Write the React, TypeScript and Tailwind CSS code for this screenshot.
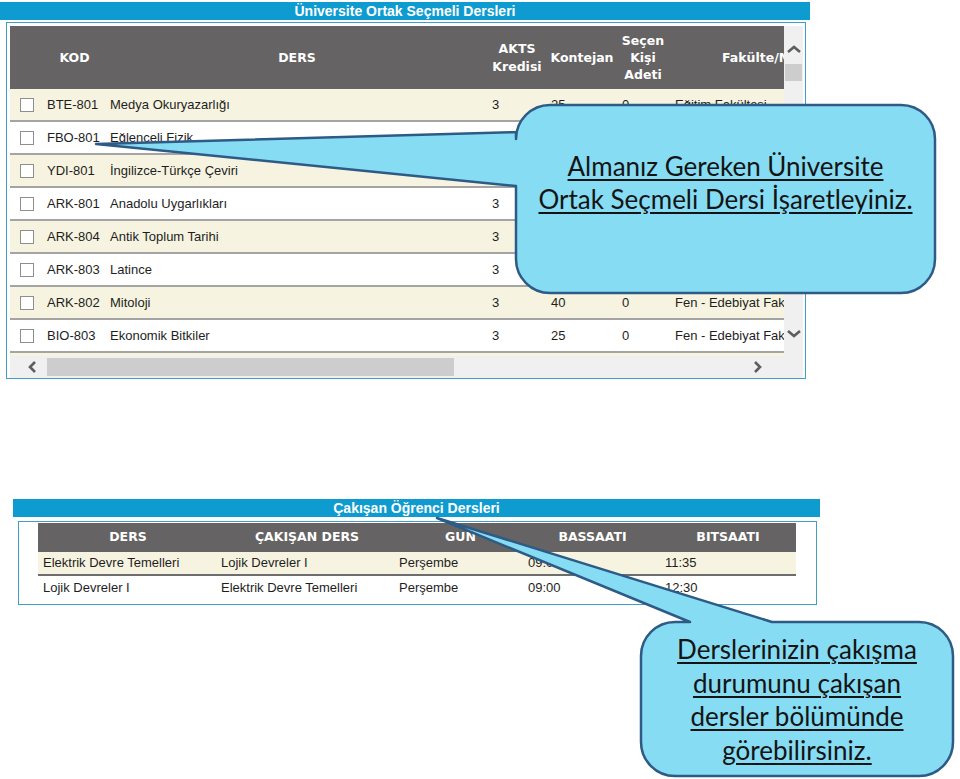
import { FC } from 'react';

type Course = {
  kod: string;
  ders: string;
  akts: string;
  kontejan: string;
  secen: string;
  fakulte: string;
};

const courses: Course[] = [
  { kod: 'BTE-801', ders: 'Medya Okuryazarlığı', akts: '3', kontejan: '25', secen: '0', fakulte: 'Eğitim Fakültesi' },
  { kod: 'FBO-801', ders: 'Eğlenceli Fizik', akts: '3', kontejan: '25', secen: '0', fakulte: 'Eğitim Fakültesi' },
  { kod: 'YDI-801', ders: 'İngilizce-Türkçe Çeviri', akts: '3', kontejan: '30', secen: '0', fakulte: 'Eğitim Fakültesi' },
  { kod: 'ARK-801', ders: 'Anadolu Uygarlıkları', akts: '3', kontejan: '40', secen: '0', fakulte: 'Fen - Edebiyat Fakültesi' },
  { kod: 'ARK-804', ders: 'Antik Toplum Tarihi', akts: '3', kontejan: '40', secen: '0', fakulte: 'Fen - Edebiyat Fakültesi' },
  { kod: 'ARK-803', ders: 'Latince', akts: '3', kontejan: '40', secen: '0', fakulte: 'Fen - Edebiyat Fakültesi' },
  { kod: 'ARK-802', ders: 'Mitoloji', akts: '3', kontejan: '40', secen: '0', fakulte: 'Fen - Edebiyat Fakültesi' },
  { kod: 'BIO-803', ders: 'Ekonomik Bitkiler', akts: '3', kontejan: '25', secen: '0', fakulte: 'Fen - Edebiyat Fakültesi' },
  { kod: 'BIO-804', ders: 'Tıbbi Bitkiler', akts: '3', kontejan: '25', secen: '0', fakulte: 'Fen - Edebiyat Fakültesi' },
];

const clashes = [
  ['Elektrik Devre Temelleri', 'Lojik Devreler I', 'Perşembe', '09:00', '11:35'],
  ['Lojik Devreler I', 'Elektrik Devre Temelleri', 'Perşembe', '09:00', '12:30'],
];

const headFont = "font-['DejaVu_Sans',sans-serif] font-bold text-[12.5px] text-white";

const Chevron: FC<{ dir: 'up' | 'down' | 'left' | 'right' }> = ({ dir }) => {
  const vertical = dir === 'up' || dir === 'down';
  const points = {
    up: '2,7 8,2 14,7',
    down: '2,1 8,6 14,1',
    left: '7,2 2,7 7,12',
    right: '1,2 6,7 1,12',
  }[dir];
  return (
    <svg width={vertical ? 16 : 8} height={vertical ? 8 : 14} viewBox={vertical ? '0 0 16 8' : '0 0 8 14'}>
      <polyline points={points} fill="none" stroke="#5e5e5e" strokeWidth="2.6" />
    </svg>
  );
};

const Callouts: FC = () => (
  <>
    <svg className="absolute left-0 top-0 pointer-events-none" width="960" height="779">
      <path
        d="M 550 105 H 901 A 34 34 0 0 1 935 139 V 259 A 34 34 0 0 1 901 293 H 550 A 34 34 0 0 1 516 259 V 186 L 96 144 L 516 132 V 139 A 34 34 0 0 1 550 105 Z"
        fill="#86dcf3"
        stroke="#2e5a86"
        strokeWidth="2.5"
        strokeLinejoin="round"
      />
      <path
        d="M 675 622 H 690 L 437 518 L 772 622 H 919 A 34 34 0 0 1 953 656 V 742 A 34 34 0 0 1 919 776 H 675 A 34 34 0 0 1 641 742 V 656 A 34 34 0 0 1 675 622 Z"
        fill="#86dcf3"
        stroke="#2e5a86"
        strokeWidth="2.5"
        strokeLinejoin="round"
      />
    </svg>
    <div className="absolute left-[516px] top-[150px] w-[419px] text-center font-['Lato',sans-serif] text-[26px] leading-[33px] text-[#141414] underline decoration-[1.5px] underline-offset-[3px]">
      <div>Almanız Gereken Üniversite</div>
      <div>Ortak Seçmeli Dersi İşaretleyiniz.</div>
    </div>
    <div className="absolute left-[641px] top-[633px] w-[312px] text-center font-['Lato',sans-serif] text-[26px] leading-[33.5px] text-[#141414] underline decoration-[1.5px] underline-offset-[3px]">
      <div>Derslerinizin çakışma</div>
      <div>durumunu çakışan</div>
      <div>dersler bölümünde</div>
      <div>görebilirsiniz.</div>
    </div>
  </>
);

const App: FC = () => {
  return (
    <div className="relative w-[960px] h-[779px] bg-white overflow-hidden font-['Liberation_Sans',Arial,sans-serif] text-[13px] text-[#1e1e1e]">
      {/* Üniversite Ortak Seçmeli Dersleri */}
      <div className="mt-[2px] w-[810px] h-[18px] bg-[#0e9bd0] flex items-center justify-center text-white font-bold text-[14px]">
        Üniversite Ortak Seçmeli Dersleri
      </div>
      <div className="mt-[2px] ml-[6px] w-[800px] border border-[#3f9fc4] pt-[3px] pl-[3px]">
        <div className="flex">
          <div className="w-[774px] h-[330px] overflow-hidden">
            <div className="w-[1000px]">
              <div className={`flex h-[63px] bg-[#656363] ${headFont} leading-[17px]`}>
                <div className="w-[32px]" />
                <div className="w-[65px] flex items-center justify-center">KOD</div>
                <div className="w-[380px] flex items-center justify-center">DERS</div>
                <div className="w-[60px] flex items-center justify-center text-center leading-[18px]">
                  AKTS
                  <br />
                  Kredisi
                </div>
                <div className="w-[70px] flex items-center justify-center">Kontejan</div>
                <div className="w-[52px] flex items-center justify-center text-center">
                  Seçen
                  <br />
                  Kişi
                  <br />
                  Adeti
                </div>
                <div className="w-[300px] flex items-center pl-[53px]">Fakülte/Meslek Yüksekokulu</div>
              </div>
              {courses.map((c, i) => (
                <div
                  key={c.kod}
                  className={`flex items-center h-[33px] border-b-2 border-[#a4a4a4] ${i % 2 === 0 ? 'bg-[#f6f4e0]' : 'bg-white'}`}
                >
                  <div className="w-[32px] pl-[10px]">
                    <div className="w-[14px] h-[14px] border border-[#8f8f8f] bg-white" />
                  </div>
                  <div className="w-[65px] pl-[5px]">{c.kod}</div>
                  <div className="w-[380px] pl-[3px]">{c.ders}</div>
                  <div className="w-[60px] pl-[5px]">{c.akts}</div>
                  <div className="w-[70px] pl-[4px]">{c.kontejan}</div>
                  <div className="w-[52px] pl-[5px]">{c.secen}</div>
                  <div className="w-[300px] pl-[6px] whitespace-nowrap">{c.fakulte}</div>
                </div>
              ))}
            </div>
          </div>
          <div className="w-[19px] h-[330px] bg-[#f0f0f0] flex flex-col items-center">
            <div className="mt-[19px] h-[8px]">
              <Chevron dir="up" />
            </div>
            <div className="mt-[11px] w-[17px] h-[17px] bg-[#cdcdcd]" />
            <div className="flex-1" />
            <div className="mb-[18px] h-[8px]">
              <Chevron dir="down" />
            </div>
          </div>
        </div>
        <div className="h-[22px] w-[793px] bg-[#f0f0f0] flex items-center">
          <div className="ml-[18px] h-[14px]">
            <Chevron dir="left" />
          </div>
          <div className="ml-[11px] w-[407px] h-[18px] bg-[#cdcdcd]" />
          <div className="flex-1" />
          <div className="mr-[41px] h-[14px]">
            <Chevron dir="right" />
          </div>
        </div>
      </div>

      {/* Çakışan Öğrenci Dersleri */}
      <div className="mt-[120px] ml-[13px] w-[807px] h-[18px] bg-[#0e9bd0] flex items-center justify-center text-white font-bold text-[14px]">
        Çakışan Öğrenci Dersleri
      </div>
      <div className="mt-[4px] ml-[18px] w-[799px] border border-[#3f9fc4] pt-[1px] pb-[4px] pl-[19px]">
        <div className={`flex h-[29px] w-[758px] bg-[#656363] ${headFont}`}>
          <div className="w-[180px] flex items-center justify-center">DERS</div>
          <div className="w-[178px] flex items-center justify-center">ÇAKIŞAN DERS</div>
          <div className="w-[129px] flex items-center justify-center">GUN</div>
          <div className="w-[135px] flex items-center justify-center">BASSAATI</div>
          <div className="w-[136px] flex items-center justify-center">BITSAATI</div>
        </div>
        {clashes.map((r, i) => (
          <div
            key={i}
            className={`flex items-center w-[758px] h-[24px] ${i === 0 ? 'bg-[#f6f4e0] border-b-2 border-[#6d6d6d]' : 'bg-white'}`}
          >
            <div className="w-[180px] pl-[5px]">{r[0]}</div>
            <div className="w-[178px] pl-[3px]">{r[1]}</div>
            <div className="w-[129px] pl-[3px]">{r[2]}</div>
            <div className="w-[135px] pl-[3px]">{r[3]}</div>
            <div className="w-[136px] pl-[5px]">{r[4]}</div>
          </div>
        ))}
      </div>

      <Callouts />
    </div>
  );
};

export default App;
